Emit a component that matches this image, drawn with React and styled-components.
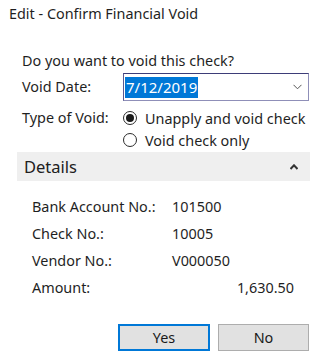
import React from "react";
import styled, { createGlobalStyle } from "styled-components";

const Global = createGlobalStyle`
  html, body { margin: 0; padding: 0; background: #ffffff; }
  * { box-sizing: border-box; }
`;

const Dialog = styled.div`
  width: 323px;
  height: 358px;
  background: #ffffff;
  font-family: "Noto Sans", "Open Sans", sans-serif;
  font-size: 14.4px;
  color: #1f1f1f;
  display: flex;
  flex-direction: column;
`;

const Title = styled.div`
  height: 28px;
  line-height: 28px;
  padding-left: 9px;
  font-size: 14.4px;
  color: #1f1f1f;
`;

const Form = styled.div`
  padding-left: 22px;
  padding-right: 14px;
  display: flex;
  flex-direction: column;
`;

const Question = styled.div`
  margin-top: 23px;
  height: 20px;
  line-height: 20px;
`;

const FieldRow = styled.div`
  display: grid;
  grid-template-columns: 101px 1fr;
  align-items: ${(p) => (p.$top ? "start" : "center")};
  margin-top: ${(p) => p.$mt || 0}px;
`;

const Label = styled.div`
  line-height: 22px;
`;

const DateBox = styled.div`
  height: 28px;
  border: 1px solid #8f8fb8;
  border-top-color: #3d3d78;
  border-left-color: #5a5a90;
  display: flex;
  align-items: center;
  padding-left: 1px;
  padding-right: 6px;
`;

const Selected = styled.span`
  background: #0078d7;
  color: #ffffff;
  font-size: 15px;
  line-height: 21px;
  padding: 0 1px;
`;

const Chevron = styled.svg`
  margin-left: auto;
  width: 9px;
  height: 6px;
`;

const RadioList = styled.div`
  display: flex;
  flex-direction: column;
`;

const RadioRow = styled.label`
  display: flex;
  align-items: center;
  height: 22px;
  gap: 8px;
`;

const RadioCircle = styled.span`
  width: 14px;
  height: 14px;
  border-radius: 50%;
  border: 1px solid #2b2b2b;
  display: flex;
  align-items: center;
  justify-content: center;
  &::after {
    content: "";
    width: 8px;
    height: 8px;
    border-radius: 50%;
    background: ${(p) => (p.$checked ? "#1a1a1a" : "transparent")};
  }
`;

const DetailsBar = styled.div`
  margin: 1px 13px 0 17px;
  height: 29px;
  background: #efefef;
  display: flex;
  align-items: center;
  padding: 0 12px 0 7px;
  font-size: 16.5px;
  color: #202020;
`;

const Caret = styled.svg`
  margin-left: auto;
  width: 8px;
  height: 6px;
`;

const DetailList = styled.div`
  margin-top: 12px;
  padding-left: 32px;
  padding-right: 29px;
  display: flex;
  flex-direction: column;
`;

const DetailRow = styled.div`
  display: grid;
  grid-template-columns: 140px 1fr;
  height: 27px;
  align-items: center;
`;

const DetailValue = styled.div`
  text-align: ${(p) => (p.$right ? "right" : "left")};
`;

const Buttons = styled.div`
  margin-top: 23px;
  display: flex;
  justify-content: flex-end;
  gap: 8px;
  padding-right: 14px;
`;

const Button = styled.button`
  width: ${(p) => (p.$primary ? 92 : 91)}px;
  height: 27px;
  background: #e1e1e1;
  border: ${(p) => (p.$primary ? "2px solid #0078d7" : "1px solid #adadad")};
  font-family: "Noto Sans", "Open Sans", sans-serif;
  font-size: 14.4px;
  color: #1a1a1a;
  padding: 0;
`;

const details = [
  { label: "Bank Account No.:", value: "101500" },
  { label: "Check No.:", value: "10005" },
  { label: "Vendor No.:", value: "V000050" },
  { label: "Amount:", value: "1,630.50", right: true },
];

export default function App() {
  return (
    <>
      <Global />
      <Dialog>
        <Title>Edit - Confirm Financial Void</Title>
        <Form>
          <Question>Do you want to void this check?</Question>
          <FieldRow $mt={2}>
            <Label>Void Date:</Label>
            <DateBox>
              <Selected>7/12/2019</Selected>
              <Chevron viewBox="0 0 9 6">
                <path d="M0.5 0.8 L4.5 4.8 L8.5 0.8" fill="none" stroke="#555" strokeWidth="1" />
              </Chevron>
            </DateBox>
          </FieldRow>
          <FieldRow $mt={6} $top>
            <Label>Type of Void:</Label>
            <RadioList>
              <RadioRow>
                <RadioCircle $checked />
                Unapply and void check
              </RadioRow>
              <RadioRow>
                <RadioCircle />
                Void check only
              </RadioRow>
            </RadioList>
          </FieldRow>
        </Form>
        <DetailsBar>
          Details
          <Caret viewBox="0 0 8 6">
            <path d="M0.5 5 L4 1.3 L7.5 5" fill="none" stroke="#333" strokeWidth="2" />
          </Caret>
        </DetailsBar>
        <DetailList>
          {details.map((d) => (
            <DetailRow key={d.label}>
              <div>{d.label}</div>
              <DetailValue $right={d.right}>{d.value}</DetailValue>
            </DetailRow>
          ))}
        </DetailList>
        <Buttons>
          <Button $primary>Yes</Button>
          <Button>No</Button>
        </Buttons>
      </Dialog>
    </>
  );
}
